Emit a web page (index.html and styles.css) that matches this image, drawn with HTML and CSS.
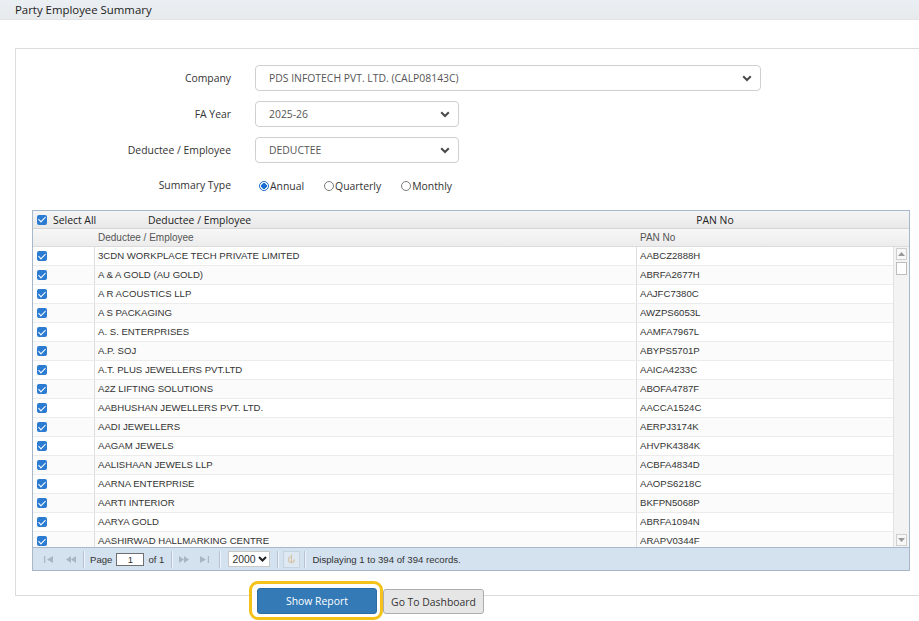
FILE: index.html
```html
<!DOCTYPE html>
<html lang="en">
<head>
  <meta charset="UTF-8">
  <title>Party Employee Summary</title>
  <meta name="viewport" content="width=device-width, initial-scale=1.0">
  <link rel="stylesheet" href="styles.css">
</head>
<body>

  <div class="titlebar">Party Employee Summary</div>

  <div class="panel">

    <div class="form">
      <label class="lbl">Company</label>
      <div class="select wide">
        <span>PDS INFOTECH PVT. LTD. (CALP08143C)</span>
        <svg class="chev" width="10" height="7" viewBox="0 0 10 7"><polyline points="1.2,1.2 5,5 8.8,1.2" /></svg>
      </div>

      <label class="lbl">FA Year</label>
      <div class="select">
        <span>2025-26</span>
        <svg class="chev" width="10" height="7" viewBox="0 0 10 7"><polyline points="1.2,1.2 5,5 8.8,1.2" /></svg>
      </div>

      <label class="lbl">Deductee / Employee</label>
      <div class="select">
        <span>DEDUCTEE</span>
        <svg class="chev" width="10" height="7" viewBox="0 0 10 7"><polyline points="1.2,1.2 5,5 8.8,1.2" /></svg>
      </div>

      <label class="lbl summary">Summary Type</label>
      <div class="radios">
        <span class="radio on"></span><span class="rtext">Annual</span>
        <span class="radio"></span><span class="rtext">Quarterly</span>
        <span class="radio"></span><span class="rtext">Monthly</span>
      </div>
    </div>

    <div class="grid">
      <div class="ghead">
        <div class="selall"><span class="cb"></span>Select All</div>
        <div>Deductee / Employee</div>
        <div class="pancap">PAN No</div>
      </div>

      <div class="gcols">
        <div class="cols">
          <div></div>
          <div class="c">Deductee / Employee</div>
          <div class="c">PAN No</div>
        </div>
        <div class="gap"></div>
      </div>

      <div class="gbody">
        <div class="rows" id="rows"></div>
        <div class="vscroll">
          <div class="sbtn"><svg width="7" height="4" viewBox="0 0 7 4"><polygon points="0,4 3.5,0 7,4" /></svg></div>
          <div class="thumb"></div>
          <div class="track"></div>
          <div class="sbtn"><svg width="7" height="4" viewBox="0 0 7 4"><polygon points="0,0 3.5,4 7,0" /></svg></div>
        </div>
      </div>

      <div class="pager">
        <svg class="pico first" width="9" height="7" viewBox="0 0 9 7"><rect x="0" y="0" width="1.2" height="7" /><polygon points="9,0 3,3.5 9,7" /></svg>
        <svg class="pico prev" width="10" height="7" viewBox="0 0 10 7"><polygon points="5,0 0,3.5 5,7" /><polygon points="10,0 5,3.5 10,7" /></svg>
        <span class="sep s1"></span>
        <span class="plabel">Page</span>
        <span class="pagebox">1</span>
        <span class="pof">of 1</span>
        <span class="sep s2"></span>
        <svg class="pico next" width="10" height="7" viewBox="0 0 10 7"><polygon points="0,0 5,3.5 0,7" /><polygon points="5,0 10,3.5 5,7" /></svg>
        <svg class="pico last" width="9" height="7" viewBox="0 0 9 7"><polygon points="0,0 6,3.5 0,7" /><rect x="7.8" y="0" width="1.2" height="7" /></svg>
        <span class="sep s3"></span>
        <span class="psize">2000<svg width="9" height="6" viewBox="0 0 9 6"><polyline points="1,1 4.5,4.5 8,1" /></svg></span>
        <span class="sep s4"></span>
        <span class="refresh"><svg width="9" height="11" viewBox="0 0 9 11"><path d="M4.5 2.5 A3 3 0 1 0 7.5 5.5" /><path d="M4.5 0.5 V9.5" /></svg></span>
        <span class="sep s5"></span>
        <span class="pinfo">Displaying 1 to 394 of 394 records.</span>
      </div>
    </div>

  </div>

  <div class="actions">
    <div class="ring"><button class="btn primary">Show Report</button></div>
    <button class="btn plain">Go To Dashboard</button>
  </div>

  <script>
    const parties = [
      ["3CDN WORKPLACE TECH PRIVATE LIMITED", "AABCZ2888H"],
      ["A & A GOLD (AU GOLD)", "ABRFA2677H"],
      ["A R ACOUSTICS LLP", "AAJFC7380C"],
      ["A S PACKAGING", "AWZPS6053L"],
      ["A. S. ENTERPRISES", "AAMFA7967L"],
      ["A.P. SOJ", "ABYPS5701P"],
      ["A.T. PLUS JEWELLERS PVT.LTD", "AAICA4233C"],
      ["A2Z LIFTING SOLUTIONS", "ABOFA4787F"],
      ["AABHUSHAN JEWELLERS PVT. LTD.", "AACCA1524C"],
      ["AADI JEWELLERS", "AERPJ3174K"],
      ["AAGAM JEWELS", "AHVPK4384K"],
      ["AALISHAAN JEWELS LLP", "ACBFA4834D"],
      ["AARNA ENTERPRISE", "AAOPS6218C"],
      ["AARTI INTERIOR", "BKFPN5068P"],
      ["AARYA GOLD", "ABRFA1094N"],
      ["AASHIRWAD HALLMARKING CENTRE", "ARAPV0344F"]
    ];

    const rows = document.getElementById("rows");
    parties.forEach(function (p) {
      const row = document.createElement("div");
      row.className = "row";
      row.innerHTML = '<div class="ck"><span class="cb"></span></div>' +
        '<div class="c"></div><div class="c"></div>';
      row.children[1].textContent = p[0];
      row.children[2].textContent = p[1];
      rows.appendChild(row);
    });
  </script>
</body>
</html>
```

FILE: styles.css
```css
* {
  box-sizing: border-box;
}

body {
  margin: 0;
  font-family: 'Open Sans', 'Noto Sans', sans-serif;
  font-size: 10.4px;
  color: #333;
  background: #fff;
  overflow-x: hidden;
}

.titlebar {
  height: 20px;
  line-height: 20px;
  padding-left: 15px;
  font-size: 11.4px;
  color: #222;
  background: linear-gradient(#eaeff4, #e8eaec);
  border-bottom: 1px solid #e2e4e6;
}

.panel {
  margin: 28px 0 0 15px;
  border: 1px solid #dcdcdc;
  border-right: none;
  padding: 16px 0 24px;
}

/* form */
.form {
  display: grid;
  grid-template-columns: 215px max-content;
  column-gap: 24px;
  row-gap: 10px;
  align-items: center;
}

.lbl {
  text-align: right;
  color: #333;
}

.select {
  height: 26px;
  width: 204px;
  border: 1px solid #cfcfcf;
  border-radius: 4px;
  display: flex;
  align-items: center;
  justify-content: space-between;
  padding: 0 8px 0 13px;
  color: #555;
}

.select.wide {
  width: 506px;
}

.chev polyline {
  fill: none;
  stroke: #4a4a4a;
  stroke-width: 2;
}

.summary {
  margin-top: 4px;
}

.radios {
  margin-top: 6px;
  display: flex;
  align-items: center;
  padding-left: 4px;
}

.radio {
  width: 10px;
  height: 10px;
  border-radius: 50%;
  border: 1px solid #7a7a7a;
  background: #fff;
  margin-right: 1px;
}

.radio.on {
  border: 1px solid #1b6fd1;
  background: radial-gradient(circle, #1b6fd1 0 2.6px, #fff 3px);
}

.rtext {
  margin-right: 20px;
}

/* grid */
.grid {
  margin: 17px 9px 0 16px;
  border: 1px solid #a9b8c8;
  font-family: 'Liberation Sans', Arial, sans-serif;
  font-size: 9.6px;
  color: #333;
}

.cb {
  width: 10px;
  height: 10px;
  border-radius: 2px;
  background: #2b7bd3;
  display: inline-flex;
  align-items: center;
  justify-content: center;
}

.cb::after {
  content: "";
  width: 3px;
  height: 6px;
  border: solid #fff;
  border-width: 0 1.6px 1.6px 0;
  transform: translateY(-1px) rotate(45deg);
}

.ghead {
  height: 18px;
  display: grid;
  grid-template-columns: 115px 1fr 388px;
  align-items: center;
  background: linear-gradient(#f5f5f5, #e9e9e9);
  border-bottom: 1px solid #d6d6d6;
  font-family: 'Open Sans', 'Noto Sans', sans-serif;
  font-size: 10.4px;
  color: #222;
}

.selall {
  display: flex;
  align-items: center;
  gap: 6px;
  padding-left: 4px;
}

.pancap {
  text-align: center;
}

.gcols {
  height: 18px;
  display: flex;
  background: linear-gradient(#f7f7f7, #ececec);
  border-bottom: 1px solid #dcdcdc;
  color: #555;
  font-size: 10px;
}

.cols,
.row {
  display: grid;
  grid-template-columns: 61px 542px 1fr;
  flex: 1;
}

.cols .c {
  padding-left: 4px;
  line-height: 17px;
}

.gcols .gap {
  width: 16px;
}

.gbody {
  height: 300px;
  display: flex;
  overflow: hidden;
}

.rows {
  flex: 1;
  overflow: hidden;
}

.row {
  height: 19px;
  border-bottom: 1px solid #ececec;
}

.row:nth-child(even) {
  background: #fbfbfb;
}

.row .ck {
  display: flex;
  align-items: center;
  padding-left: 4px;
}

.row .c {
  border-left: 1px solid #dedede;
  padding-left: 3px;
  line-height: 18px;
  white-space: nowrap;
}

.vscroll {
  width: 16px;
  display: flex;
  flex-direction: column;
  padding: 1px 2px;
  gap: 2px;
  background: #f3f3f3;
  border-left: 1px solid #e2e2e2;
}

.sbtn {
  height: 12px;
  border: 1px solid #cfcfcf;
  background: #f7f7f7;
  display: flex;
  align-items: center;
  justify-content: center;
}

.sbtn polygon {
  fill: #9a9a9a;
}

.thumb {
  height: 13px;
  border: 1px solid #bdbdbd;
  background: #fdfdfd;
}

.track {
  flex: 1;
}

/* pager */
.pager {
  height: 23px;
  display: flex;
  align-items: center;
  padding-left: 11px;
  background: #d4e2f0;
  border-top: 1px solid #a9b8c8;
  color: #333;
}

.pico {
  fill: #a7b5c4;
}

.prev { margin-left: 13px; }
.s1 { margin-left: 7px; }
.plabel { margin-left: 5px; }
.pagebox { margin-left: 4px; }
.pof { margin-left: 4px; }
.s2 { margin-left: 7px; }
.next { margin-left: 6px; }
.last { margin-left: 11px; }
.s3 { margin-left: 10px; }
.psize { margin-left: 7px; }
.s4 { margin-left: 7px; }
.refresh { margin-left: 4px; }
.s5 { margin-left: 4px; }
.pinfo { margin-left: 6px; }

.sep {
  width: 2px;
  height: 17px;
  border-left: 1px solid #b4c3d3;
  border-right: 1px solid #eef4fa;
}

.pagebox {
  width: 28px;
  height: 13px;
  border: 1px solid #6f6f6f;
  background: #fff;
  text-align: center;
  line-height: 11px;
}

.psize {
  width: 42px;
  height: 16px;
  background: #fff;
  border: 1px solid #c9c9c9;
  display: flex;
  align-items: center;
  justify-content: space-between;
  padding: 0 2px 0 3px;
  font-size: 10.4px;
}

.psize polyline {
  fill: none;
  stroke: #222;
  stroke-width: 2;
}

.refresh {
  width: 17px;
  height: 17px;
  border: 1px solid #c6d3e0;
  background: #dde8f2;
  display: flex;
  align-items: center;
  justify-content: center;
}

.refresh path {
  fill: none;
  stroke: #d6c5a8;
  stroke-width: 1.2;
}

/* buttons */
.actions {
  display: flex;
  align-items: flex-start;
  padding-left: 249px;
  margin-top: -15px;
  position: relative;
}

.ring {
  border: 3px solid #f5c21a;
  border-radius: 9px;
  padding: 4px 3px 3px 5px;
  background: #fff;
}

.btn {
  font-family: 'Open Sans', 'Noto Sans', sans-serif;
  font-size: 10.4px;
  height: 26px;
  border-radius: 3px;
  cursor: pointer;
}

.btn.primary {
  width: 120px;
  background: #337ab7;
  border: 1px solid #2e6da4;
  color: #fff;
}

.btn.plain {
  margin-top: 8px;
  height: 25px;
  width: 101px;
  padding: 0;
  background: #e6e6e6;
  border: 1px solid #adadad;
  color: #333;
}
```
